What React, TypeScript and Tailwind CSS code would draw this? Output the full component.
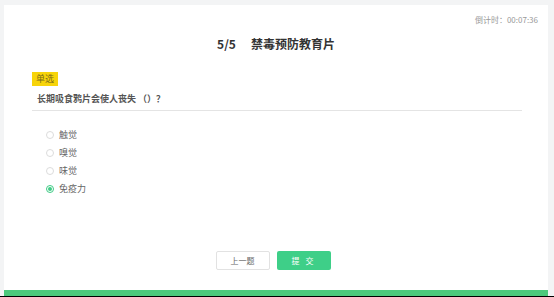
const options = ["触觉", "嗅觉", "味觉", "免疫力"];

export default function App() {
  const selected = 3;
  return (
    <div
      className="w-[554px] h-[297px] flex flex-col bg-[#f3f4f5] pt-[5px]"
      style={{ fontFamily: '"Noto Sans CJK SC", "Noto Sans", sans-serif' }}
    >
      <div className="flex-1 ml-[4px] mr-[6px] bg-white flex flex-col">
        {/* timer */}
        <div className="pt-[10px] pr-[10px] text-right text-[8px] leading-[10px] text-[#999]">
          倒计时：00:07:36
        </div>

        {/* title */}
        <div className="mt-[11px] flex justify-center text-[12px] leading-[16px] font-bold text-[#333]">
          <span className="mr-[15px]">5/5</span>
          <span>禁毒预防教育片</span>
        </div>

        {/* question */}
        <div className="mt-[20px] pl-[28px] pr-[26px] flex flex-col">
          <div className="w-fit h-[14px] px-[4px] bg-[#f7d40a] text-[9px] leading-[14px] text-[#7a6a1a]">
            单选
          </div>
          <div className="mt-[7px] pb-[5px] pl-[5px] border-b border-[#e4e4e4] text-[9px] leading-[12px] font-semibold text-[#555]">
            长期吸食鸦片会使人丧失 （）？
          </div>
        </div>

        {/* options */}
        <div className="mt-[15px] pl-[42px] flex flex-col">
          {options.map((opt, i) => (
            <div key={opt} className="h-[18px] flex items-center text-[9px] text-[#666]">
              {i === selected ? (
                <span className="w-[8px] h-[8px] rounded-full border border-[#3ecb85] flex items-center justify-center">
                  <span className="w-[4px] h-[4px] rounded-full bg-[#3ecb85]" />
                </span>
              ) : (
                <span className="w-[8px] h-[8px] rounded-full border border-[#dcdcdc]" />
              )}
              <span className="ml-[5px]">{opt}</span>
            </div>
          ))}
        </div>

        {/* buttons */}
        <div className="mt-auto mb-[20px] flex justify-center gap-[7px] pr-[6px]">
          <button className="w-[54px] h-[19px] border border-[#e2e2e2] rounded-[2px] bg-white text-[8px] text-[#666]">
            上一题
          </button>
          <button className="w-[54px] h-[19px] rounded-[2px] bg-[#3ecf88] text-[8px] text-white tracking-[2px]">
            提 交
          </button>
        </div>

        <div className="h-[6px] bg-[#4dc97c]" />
      </div>
      <div className="h-px bg-black" />
    </div>
  );
}
